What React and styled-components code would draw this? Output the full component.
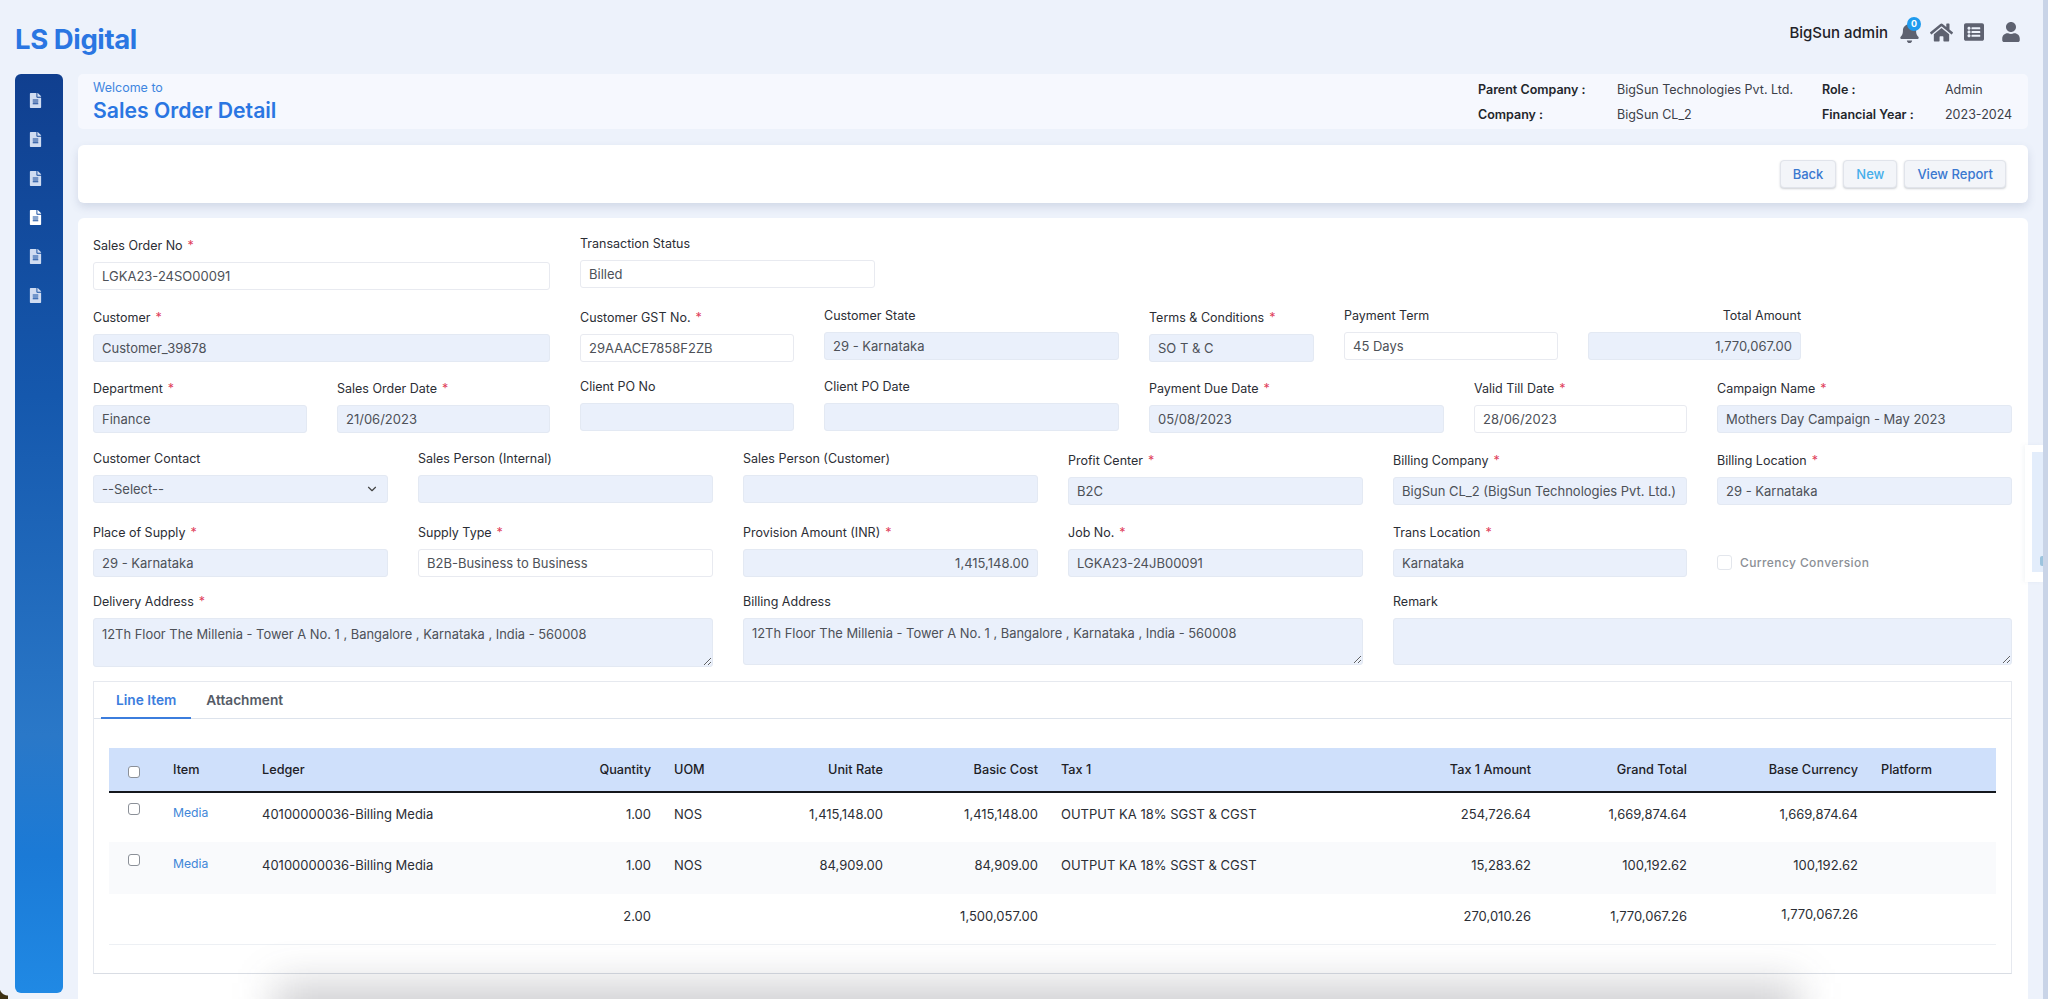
import React from 'react';
import styled, { createGlobalStyle } from 'styled-components';
import { FaBell, FaHome, FaListAlt, FaUser, FaFileAlt } from 'react-icons/fa';
import { ChevronDown } from 'lucide-react';

const GlobalStyle = createGlobalStyle`
	html, body {
		margin: 0;
		padding: 0;
		height: 100%;
		background: #edf2fb;
		font-family: Inter, "Liberation Sans", sans-serif;
		color: #333;
	}
	* {
		box-sizing: border-box;
	}
`;

const Page = styled.div`
	position: relative;
	height: 999px;
	overflow: hidden;
	background: #edf2fb;
	border-right: 5px solid #c9d4e7;
`;

const TopBar = styled.header`
	display: flex;
	align-items: flex-start;
	justify-content: space-between;
	height: 74px;
	padding: 22px 22px 0 15px;
`;

const Logo = styled.div`
	margin-top: 1px;
	font-size: 27.5px;
	line-height: 32px;
	font-weight: 700;
	letter-spacing: -0.4px;
	color: #2a76e2;
`;

const UserArea = styled.div`
	display: flex;
	align-items: center;
	height: 20px;
	color: #5e6270;
`;

const UserName = styled.span`
	font-size: 15px;
	font-weight: 500;
	color: #1f2228;
	margin-right: 11px;
`;

const IconSlot = styled.span`
	position: relative;
	display: flex;
	font-size: ${({ $size }) => $size}px;
	margin-left: ${({ $left }) => $left || 0}px;
`;

const Badge = styled.span`
	position: absolute;
	top: -5px;
	right: -1px;
	width: 14px;
	height: 14px;
	border-radius: 50%;
	background: #1f9bee;
	color: #fff;
	font-size: 9px;
	font-weight: 700;
	line-height: 14px;
	text-align: center;
`;

const Body = styled.div`
	display: flex;
	align-items: flex-start;
	gap: 15px;
	padding: 0 15px;
`;

const Sidebar = styled.nav`
	flex: none;
	display: flex;
	flex-direction: column;
	gap: 24px;
	width: 48px;
	height: 919px;
	padding: 19px 0 0 13px;
	border-radius: 6px;
	background: linear-gradient(180deg, #103f8f 0%, #1558ad 35%, #2a78c8 72%, #1b7ad6 85%, #2089e4 100%);
`;

const SideIcon = styled.span`
	display: flex;
	font-size: 15px;
	color: ${({ $active }) => ($active ? '#ffffff' : '#d0dcf1')};
`;

const Main = styled.main`
	flex: 1;
	min-width: 0;
	display: flex;
	flex-direction: column;
`;

const TitleCard = styled.section`
	display: flex;
	justify-content: space-between;
	align-items: center;
	height: 55px;
	padding: 0 16px 0 15px;
	border-radius: 5px;
	background: #f6f8fe;
`;

const Welcome = styled.div`
	font-size: 12.5px;
	line-height: 16px;
	color: #3f86e0;
`;

const PageTitle = styled.h1`
	margin: 0;
	font-size: 21.2px;
	line-height: 28px;
	font-weight: 600;
	color: #2a76e2;
`;

const InfoGrid = styled.dl`
	display: grid;
	grid-template-columns: 139px 205px 123px 67px;
	row-gap: 8px;
	margin: 0;
	font-size: 12.5px;
	line-height: 17px;
	white-space: nowrap;
`;

const InfoKey = styled.dt`
	font-weight: 600;
	color: #23262c;
`;

const InfoValue = styled.dd`
	margin: 0;
	color: #3c4048;
`;

const ActionCard = styled.section`
	display: flex;
	justify-content: flex-end;
	align-items: center;
	gap: 7px;
	height: 58px;
	margin-top: 16px;
	padding-right: 22px;
	border-radius: 6px;
	background: #fff;
	box-shadow: 0 4px 9px rgba(70, 90, 130, 0.16);
`;

const ActionButton = styled.button`
	height: 28px;
	padding: 0 ${({ $pad }) => $pad}px;
	border: 1px solid #e1e4eb;
	border-radius: 4px;
	background: #f3f5f9;
	box-shadow: 0 1px 2px rgba(60, 70, 90, 0.25);
	font-family: inherit;
	font-size: 13px;
	font-weight: 500;
	color: ${({ $light }) => ($light ? '#45aeea' : '#3a78d0')};
`;

const FormCard = styled.section`
	display: flex;
	flex-direction: column;
	gap: 18.7px;
	height: 800px;
	margin-top: 15px;
	padding: 19px 16px 0 15px;
	border-radius: 6px 6px 0 0;
	background: #fff;
`;

const Row = styled.div`
	display: flex;
	align-items: flex-start;
	gap: 30px;
	height: 53px;
`;

const TallRow = styled(Row)`
	height: 70px;
`;

const Field = styled.div`
	flex: none;
	width: ${({ $w }) => $w}px;
	margin-top: ${({ $up }) => ($up ? '-2px' : '0')};
`;

const Label = styled.label`
	display: block;
	height: 18px;
	margin-bottom: 7px;
	font-size: 12.5px;
	line-height: 18px;
	color: #2b2e35;
	text-align: ${({ $right }) => ($right ? 'right' : 'left')};
`;

const Star = styled.span`
	margin-left: 5px;
	color: #e0405a;
`;

const Input = styled.input`
	display: block;
	width: 100%;
	height: 28px;
	padding: 0 8px;
	border: 1px solid ${({ $locked }) => ($locked ? '#e3e9f3' : '#e8eaf0')};
	border-radius: 3px;
	outline: none;
	background: ${({ $locked }) => ($locked ? '#eaf0fb' : '#fff')};
	font-family: inherit;
	font-size: 13px;
	color: #4d5158;
	text-align: ${({ $right }) => ($right ? 'right' : 'left')};
`;

const SelectWrap = styled.div`
	position: relative;
	color: #444;
	svg {
		position: absolute;
		top: 7px;
		right: 9px;
		pointer-events: none;
	}
`;

const Select = styled.select`
	display: block;
	width: 100%;
	height: 28px;
	padding: 0 8px;
	border: 1px solid #e3e9f3;
	border-radius: 3px;
	outline: none;
	appearance: none;
	background: #eaf0fb;
	font-family: inherit;
	font-size: 13px;
	color: #4d5158;
`;

const TextArea = styled.textarea`
	display: block;
	width: 100%;
	height: ${({ $h }) => $h || 47}px;
	padding: ${({ $h }) => ($h ? 7 : 6)}px 8px 6px;
	border: 1px solid #e3e9f3;
	border-radius: 3px;
	outline: none;
	background: #eaf0fb;
	font-family: inherit;
	font-size: 12.9px;
	line-height: 17px;
	color: #4d5158;
`;

const CheckField = styled.label`
	display: flex;
	align-items: center;
	gap: 8px;
	margin-top: 31px;
	font-size: 12px;
	font-weight: 500;
	letter-spacing: 0.4px;
	color: #8b8f96;
`;

const Check = styled.input.attrs({ type: 'checkbox' })`
	flex: none;
	display: block;
	width: ${({ $big }) => ($big ? 15 : 12)}px;
	height: ${({ $big }) => ($big ? 15 : 12)}px;
	margin: 0;
	appearance: none;
	border: 1px solid ${({ $big }) => ($big ? '#e3e6ec' : '#8b9098')};
	border-radius: 3px;
	background: #fff;
`;

const TabBox = styled.section`
	height: 293px;
	margin-top: -3px;
	padding: 0 15px;
	border: 1px solid #e6e9ef;
	border-bottom-color: #d9dde4;
`;

const TabBar = styled.div`
	display: flex;
	height: 37px;
	margin: 0 -15px;
	padding-left: 7px;
	border-bottom: 1px solid #dde3ec;
`;

const Tab = styled.div`
	padding: 0 15px;
	font-size: 13.7px;
	font-weight: 600;
	line-height: 36px;
	height: 37px;
	color: ${({ $active }) => ($active ? '#3b7ddd' : '#555b66')};
	border-bottom: 2px solid ${({ $active }) => ($active ? '#3b7ddd' : 'transparent')};
`;

const Table = styled.table`
	width: 1887px;
	margin-top: 29px;
	border-collapse: collapse;
	table-layout: fixed;
	font-size: 13px;
	color: #2b2e35;
`;

const Th = styled.th`
	height: 44px;
	padding: 0 ${({ $right }) => ($right ? 15 : 8)}px 0 8px;
	border-bottom: 2px solid #14171c;
	background: #cfe0fb;
	font-size: 12.7px;
	font-weight: 500;
	text-align: ${({ $right }) => ($right ? 'right' : 'left')};
	color: #1d2026;
`;

const Tr = styled.tr`
	height: ${({ $h }) => $h}px;
	background: ${({ $shade }) => ($shade ? '#f9fafc' : 'transparent')};
	border-bottom: 1px solid ${({ $line }) => ($line ? '#edf0f4' : 'transparent')};
`;

const Td = styled.td`
	padding: 0 ${({ $right }) => ($right ? 15 : 8)}px ${({ $lift }) => ($lift ? 10 : 7)}px 8px;
	text-align: ${({ $right }) => ($right ? 'right' : 'left')};
`;

const CheckTd = styled.td`
	padding: 0 0 17px 19px;
`;

const CheckTh = styled(Th)`
	padding: 5px 0 0 19px;
`;

const LinkTd = styled(Td)`
	padding-bottom: 10px;
	font-size: 12.2px;
	color: #3f86d8;
`;

const SidePeek = styled.div`
	position: absolute;
	top: 445px;
	right: 0;
	width: 18px;
	height: 137px;
	padding: 7px 0 10px 7px;
	background: #fff;
	box-shadow: -2px 0 4px rgba(120, 135, 170, 0.08);
`;

const SidePeekInner = styled.div`
	position: relative;
	height: 100%;
	background: #e3edfb;
	&::after {
		content: "";
		position: absolute;
		right: 0;
		bottom: 6px;
		width: 3px;
		height: 10px;
		border-radius: 2px 0 0 2px;
		background: #9cc4de;
	}
`;

const DockShade = styled.div`
	position: absolute;
	left: 275px;
	right: 245px;
	bottom: -50px;
	height: 66px;
	background: rgba(60, 60, 70, 0.24);
	filter: blur(20px);
	pointer-events: none;
`;

const ScreenCorner = styled.div`
	position: absolute;
	left: 0;
	bottom: 0;
	width: 8px;
	height: 12px;
	background: radial-gradient(circle at 100% 0, transparent 8px, #3d3113 9px);
`;

const ROWS = [
	[
		{ w: 457, label: 'Sales Order No', req: true, value: 'LGKA23-24SO00091' },
		{ w: 295, label: 'Transaction Status', value: 'Billed', up: true },
	],
	[
		{ w: 457, label: 'Customer', req: true, value: 'Customer_39878', locked: true },
		{ w: 214, label: 'Customer GST No.', req: true, value: '29AAACE7858F2ZB' },
		{ w: 295, label: 'Customer State', value: '29 - Karnataka', locked: true, up: true },
		{ w: 165, label: 'Terms & Conditions', req: true, value: 'SO T & C', locked: true },
		{ w: 214, label: 'Payment Term', value: '45 Days', up: true },
		{ w: 213, label: 'Total Amount', value: '1,770,067.00', locked: true, up: true, right: true, labelRight: true },
	],
	[
		{ w: 214, label: 'Department', req: true, value: 'Finance', locked: true },
		{ w: 213, label: 'Sales Order Date', req: true, value: '21/06/2023', locked: true },
		{ w: 214, label: 'Client PO No', value: '', locked: true, up: true },
		{ w: 295, label: 'Client PO Date', value: '', locked: true, up: true },
		{ w: 295, label: 'Payment Due Date', req: true, value: '05/08/2023', locked: true },
		{ w: 213, label: 'Valid Till Date', req: true, value: '28/06/2023' },
		{ w: 295, label: 'Campaign Name', req: true, value: 'Mothers Day Campaign - May 2023', locked: true },
	],
	[
		{ w: 295, label: 'Customer Contact', select: true, up: true },
		{ w: 295, label: 'Sales Person (Internal)', value: '', locked: true, up: true },
		{ w: 295, label: 'Sales Person (Customer)', value: '', locked: true, up: true },
		{ w: 295, label: 'Profit Center', req: true, value: 'B2C', locked: true },
		{ w: 294, label: 'Billing Company', req: true, value: 'BigSun CL_2 (BigSun Technologies Pvt. Ltd.)', locked: true },
		{ w: 295, label: 'Billing Location', req: true, value: '29 - Karnataka', locked: true },
	],
	[
		{ w: 295, label: 'Place of Supply', req: true, value: '29 - Karnataka', locked: true },
		{ w: 295, label: 'Supply Type', req: true, value: 'B2B-Business to Business' },
		{ w: 295, label: 'Provision Amount (INR)', req: true, value: '1,415,148.00', locked: true, right: true },
		{ w: 295, label: 'Job No.', req: true, value: 'LGKA23-24JB00091', locked: true },
		{ w: 294, label: 'Trans Location', req: true, value: 'Karnataka', locked: true },
	],
];

const ADDRESS = '12Th Floor The Millenia - Tower A No. 1 , Bangalore , Karnataka , India - 560008';

const COLUMNS = [
	{ w: 56 },
	{ w: 89, label: 'Item' },
	{ w: 246, label: 'Ledger' },
	{ w: 166, label: 'Quantity', right: true },
	{ w: 114, label: 'UOM' },
	{ w: 118, label: 'Unit Rate', right: true },
	{ w: 155, label: 'Basic Cost', right: true },
	{ w: 297, label: 'Tax 1' },
	{ w: 196, label: 'Tax 1 Amount', right: true },
	{ w: 156, label: 'Grand Total', right: true },
	{ w: 171, label: 'Base Currency', right: true },
	{ w: 123, label: 'Platform' },
];

const LINES = [
	{ qty: '1.00', rate: '1,415,148.00', basic: '1,415,148.00', tax: '254,726.64', total: '1,669,874.64', base: '1,669,874.64', h: 50 },
	{ qty: '1.00', rate: '84,909.00', basic: '84,909.00', tax: '15,283.62', total: '100,192.62', base: '100,192.62', h: 52, shade: true },
];

function FormField({ field }) {
	return (
		<Field $w={field.w} $up={field.up}>
			<Label $right={field.labelRight}>
				{field.label}
				{field.req && <Star>*</Star>}
			</Label>
			{field.select ? (
				<SelectWrap>
					<Select defaultValue="">
						<option value="">--Select--</option>
					</Select>
					<ChevronDown size={14} />
				</SelectWrap>
			) : (
				<Input readOnly value={field.value} $locked={field.locked} $right={field.right} />
			)}
		</Field>
	);
}

function App() {
	return (
		<Page>
			<GlobalStyle />
			<TopBar>
				<Logo>LS Digital</Logo>
				<UserArea>
					<UserName>BigSun admin</UserName>
					<IconSlot $size={21}>
						<FaBell />
						<Badge>0</Badge>
					</IconSlot>
					<IconSlot $size={23} $left={10}><FaHome /></IconSlot>
					<IconSlot $size={20} $left={11}><FaListAlt /></IconSlot>
					<IconSlot $size={20} $left={17}><FaUser /></IconSlot>
				</UserArea>
			</TopBar>
			<Body>
				<Sidebar>
					{[0, 1, 2, 3, 4, 5].map((i) => (
						<SideIcon key={i} $active={i === 3}><FaFileAlt /></SideIcon>
					))}
				</Sidebar>
				<Main>
					<TitleCard>
						<div>
							<Welcome>Welcome to</Welcome>
							<PageTitle>Sales Order Detail</PageTitle>
						</div>
						<InfoGrid>
							<InfoKey>Parent Company :</InfoKey>
							<InfoValue>BigSun Technologies Pvt. Ltd.</InfoValue>
							<InfoKey>Role :</InfoKey>
							<InfoValue>Admin</InfoValue>
							<InfoKey>Company :</InfoKey>
							<InfoValue>BigSun CL_2</InfoValue>
							<InfoKey>Financial Year :</InfoKey>
							<InfoValue>2023-2024</InfoValue>
						</InfoGrid>
					</TitleCard>
					<ActionCard>
						<ActionButton $pad={12}>Back</ActionButton>
						<ActionButton $pad={12} $light>New</ActionButton>
						<ActionButton $pad={12}>View Report</ActionButton>
					</ActionCard>
					<FormCard>
						{ROWS.map((row, i) => (
							<Row key={i}>
								{row.map((field) => (
									<FormField key={field.label} field={field} />
								))}
								{i === 4 && (
									<CheckField>
										<Check $big disabled />
										Currency Conversion
									</CheckField>
								)}
							</Row>
						))}
						<TallRow>
							<Field $w={620} $up>
								<Label>Delivery Address<Star>*</Star></Label>
								<TextArea readOnly value={ADDRESS} $h={49} />
							</Field>
							<Field $w={620} $up>
								<Label>Billing Address</Label>
								<TextArea readOnly value={ADDRESS} />
							</Field>
							<Field $w={619} $up>
								<Label>Remark</Label>
								<TextArea readOnly value="" />
							</Field>
						</TallRow>
						<TabBox>
							<TabBar>
								<Tab $active>Line Item</Tab>
								<Tab>Attachment</Tab>
							</TabBar>
							<Table>
								<colgroup>
									{COLUMNS.map((col, i) => (
										<col key={i} width={col.w} />
									))}
								</colgroup>
								<thead>
									<tr>
										<CheckTh><Check /></CheckTh>
										{COLUMNS.slice(1).map((col) => (
											<Th key={col.label} $right={col.right}>{col.label}</Th>
										))}
									</tr>
								</thead>
								<tbody>
									{LINES.map((line, i) => (
										<Tr key={i} $h={line.h} $shade={line.shade}>
											<CheckTd><Check /></CheckTd>
											<LinkTd>Media</LinkTd>
											<Td>40100000036-Billing Media</Td>
											<Td $right>{line.qty}</Td>
											<Td>NOS</Td>
											<Td $right>{line.rate}</Td>
											<Td $right>{line.basic}</Td>
											<Td>OUTPUT KA 18% SGST &amp; CGST</Td>
											<Td $right>{line.tax}</Td>
											<Td $right>{line.total}</Td>
											<Td $right>{line.base}</Td>
											<Td />
										</Tr>
									))}
									<Tr $h={50} $line>
										<Td />
										<Td />
										<Td />
										<Td $right>2.00</Td>
										<Td />
										<Td />
										<Td $right>1,500,057.00</Td>
										<Td />
										<Td $right>270,010.26</Td>
										<Td $right>1,770,067.26</Td>
										<Td $right $lift>1,770,067.26</Td>
										<Td />
									</Tr>
								</tbody>
							</Table>
						</TabBox>
					</FormCard>
				</Main>
			</Body>
			<SidePeek><SidePeekInner /></SidePeek>
			<DockShade />
			<ScreenCorner />
		</Page>
	);
}

export default App;
